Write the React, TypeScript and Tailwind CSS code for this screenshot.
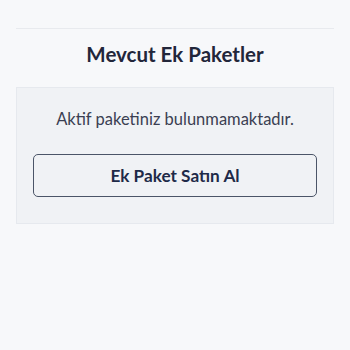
export default function App() {
  return (
    <div
      className="w-[350px] h-[350px] bg-[#f7f8fa] px-4 pt-[28px]"
      style={{ fontFamily: "Lato, 'Noto Sans', sans-serif" }}
    >
      <div className="border-t border-[#e8eaee]" />
      <h2 className="text-center text-[20.5px] font-bold text-[#22263a] mt-[11px] leading-[28px]">
        Mevcut Ek Paketler
      </h2>
      <div className="mt-[19px] bg-[#f0f2f5] border border-[#e6e9ee] px-4 pt-[19px] pb-[26px]">
        <p className="text-center text-[16.5px] text-[#3b3f52] leading-[24px]">
          Aktif paketiniz bulunmamaktadır.
        </p>
        <button className="mt-[23px] w-full h-[43px] rounded-[5px] border-[1.5px] border-[#4b5568] text-[17.2px] font-bold text-[#1e2a48]">
          Ek Paket Satın Al
        </button>
      </div>
    </div>
  );
}
